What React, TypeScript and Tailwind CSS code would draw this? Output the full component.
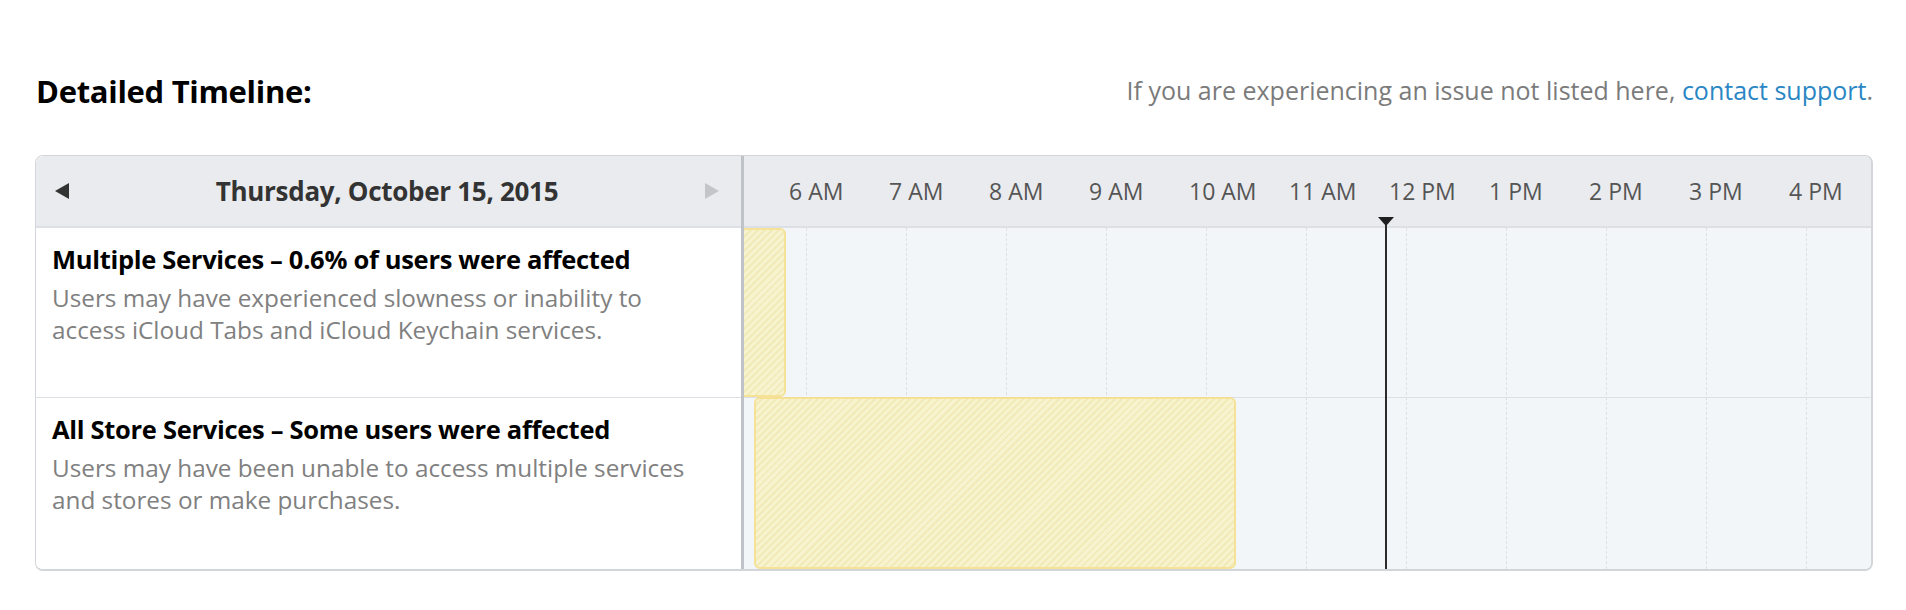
import React from "react";

const hours = ["6 AM", "7 AM", "8 AM", "9 AM", "10 AM", "11 AM", "12 PM", "1 PM", "2 PM", "3 PM", "4 PM"];

const stripe =
  "bg-[repeating-linear-gradient(135deg,#f8f3cb_0px,#f8f3cb_3px,#f2eab0_3px,#f2eab0_5px)]";

function Row({ title, lines, tall }: { title: string; lines: string[]; tall?: boolean }) {
  return (
    <div className={`${tall ? "h-[171px]" : "h-[170px] border-b border-[#dcdfe3]"} pl-[16px] pt-[15px]`}>
      <div className="text-[25.5px] font-bold leading-[32px] tracking-[-0.3px] text-black">{title}</div>
      <div className="mt-[7px] text-[24.3px] leading-[32px] text-[#808080]">
        {lines[0]}
        <br />
        {lines[1]}
      </div>
    </div>
  );
}

export default function App() {
  return (
    <div
      className="h-[610px] w-[1906px] bg-white pl-[35px] pr-[33px] pt-[73px]"
      style={{ fontFamily: "'Open Sans', 'Liberation Sans', sans-serif" }}
    >
      <div className="flex h-[36px] items-center justify-between">
        <h2 className="pl-px text-[31px] font-bold tracking-[-0.3px] text-black">Detailed Timeline:</h2>
        <p className="text-[25px] text-[#7b7b7b]">
          If you are experiencing an issue not listed here,{" "}
          <a className="text-[#2a86c4]">contact support</a>.
        </p>
      </div>

      <div className="mt-[46px] flex h-[416px] overflow-hidden rounded-[8px] border-t border-l border-r-2 border-b-2 border-[#d2d5d9]">
        {/* left column */}
        <div className="flex w-[708px] flex-col border-r-[3px] border-[#bfc3c8] bg-white">
          <div className="flex h-[72px] items-center justify-between border-b-2 border-[#dcdfe3] bg-[#e9ebee] pl-[19px] pr-[22px]">
            <svg width="14" height="16" viewBox="0 0 14 16">
              <path d="M0 8 L14 0 L14 16 Z" fill="#333" />
            </svg>
            <span className="text-[26px] font-bold tracking-[-0.3px] text-[#333]">Thursday, October 15, 2015</span>
            <svg width="14" height="16" viewBox="0 0 14 16">
              <path d="M14 8 L0 0 L0 16 Z" fill="#c3c5c8" />
            </svg>
          </div>
          <Row
            title="Multiple Services – 0.6% of users were affected"
            lines={[
              "Users may have experienced slowness or inability to",
              "access iCloud Tabs and iCloud Keychain services.",
            ]}
          />
          <Row
            tall
            title="All Store Services – Some users were affected"
            lines={["Users may have been unable to access multiple services", "and stores or make purchases."]}
          />
        </div>

        {/* timeline */}
        <div className="relative flex min-w-0 flex-1 flex-col">
          <div className="flex h-[72px] items-center overflow-hidden border-b-2 border-[#dcdfe3] bg-[#e9ebee] pl-[45px]">
            {hours.map((h) => (
              <div key={h} className="w-[100px] shrink-0 text-[23px] text-[#555]">
                {h}
              </div>
            ))}
          </div>
          <div className="relative flex-1 overflow-hidden bg-[#f2f6f9]">
            <div className="absolute inset-0 flex overflow-hidden pl-[62px]">
              {hours.map((h) => (
                <div key={h} className="h-full w-[100px] shrink-0 border-l border-dashed border-[#dde1e6]" />
              ))}
            </div>
            <div className="relative h-[170px] border-b border-[#dcdfe3]">
              <div
                className={`absolute -left-[8px] top-0 bottom-0 w-[50px] rounded-[6px] border-2 border-[#f6e08c] opacity-90 ${stripe}`}
              />
            </div>
            <div className="relative h-[171px]">
              <div
                className={`absolute left-[10px] -top-px bottom-0 w-[482px] rounded-[6px] border-2 border-[#f6e08c] opacity-90 ${stripe}`}
              />
            </div>
          </div>
          {/* now marker */}
          <div className="absolute left-[634px] top-[61px] bottom-0 flex flex-col items-center">
            <svg width="16" height="9" viewBox="0 0 16 9" className="-mb-px">
              <path d="M0 0 H16 L8 9 Z" fill="#1f1f1f" />
            </svg>
            <div className="w-[2px] flex-1 bg-[#2b2b2b]" />
          </div>
        </div>
      </div>
    </div>
  );
}
